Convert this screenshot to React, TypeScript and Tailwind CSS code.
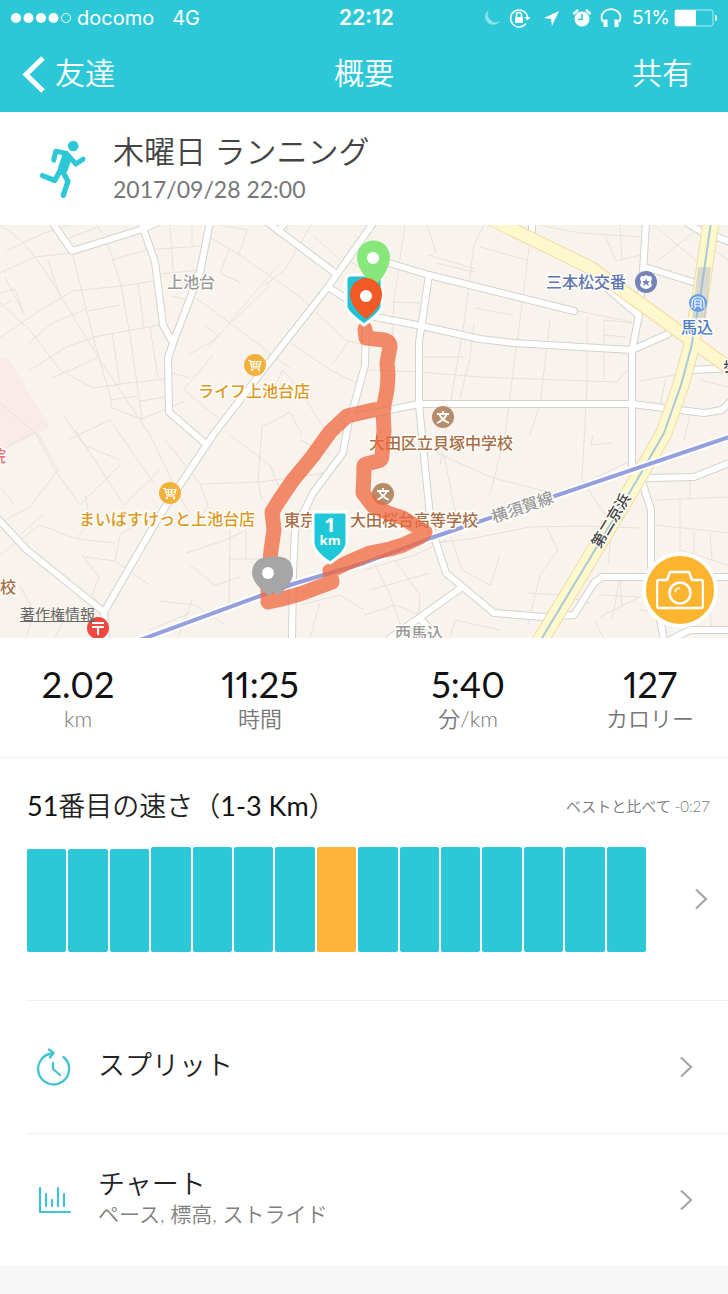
import type { ReactNode } from "react"

const stats = [
  { value: "2.02", unit: "km" },
  { value: "11:25", unit: "時間" },
  { value: "5:40", unit: "分/km" },
  { value: "127", unit: "カロリー" },
]

const runs = [103, 103, 103, 105, 105, 105, 105, 105, 105, 105, 105, 105, 105, 105, 105]
const currentRun = 7

// Map geometry, drawn on a 728 x 413 canvas
const streets = [
  "M-2 -2L22 16L44 44L100 135L150 210L175 262L190 290",
  "M0 48L35 32L72 28M6 26L44 8L75 -2",
  "M0 78L30 105L60 145L93 163",
  "M48 35L60 71M0 113L40 85L73 66L122 61L160 55",
  "M72 28L93 112L110 170L112 183L142 194L185 176",
  "M108 20L121 60L130 110L142 194",
  "M112 35L146 25L200 21M88 86L120 80M52 98L86 84M29 118L52 98",
  "M93 112L126 106L160 100M138 58L144 103M112 108L120 160M150 102L158 153",
  "M92 163L130 158L165 154M110 175L137 171M140 176L165 172",
  "M69 13L96 3M96 0L102 8M170 0L173 45M192 0L192 20M160 49L198 45",
  "M0 68L15 64L24 89M12 75L0 82M5 52L24 89",
  "M52 153L97 133M30 145L68 121L95 112",
  "M63 190L84 220L120 235M35 207L0 226M0 178L40 212L58 245L30 282L0 298",
  "M211 13L240 30L300 72L345 115L364 120",
  "M229 24L220 48L241 58M279 39L209 122M270 60L232 97",
  "M196 73L230 98L290 143M190 129L219 112L205 100M184 164L213 130",
  "M172 71L192 76M220 0L247 5L238 32M311 0L285 45L265 60",
  "M183 164L205 182L220 195M172 148L190 153M270 170L283 145L300 165L323 202",
  "M262 202L290 187L302 210M291 118L330 145L360 160M348 117L332 140",
  "M313 10L340 35M340 30L364 45M230 210L270 240L280 265",
  "M35 207L55 245L80 280L120 240M75 205L124 280L160 245M70 214L110 195L155 260",
  "M0 262L15 280M0 330L40 300L77 314L115 318M77 314L90 295L85 270",
  "M20 310L42 290M85 332L115 336L150 360M82 330L99 352L92 370L104 385",
  "M115 336L120 310L140 296M55 413L70 380M26 413L34 388L20 360",
  "M200 259L260 257L325 248M165 215L200 259L208 280L196 300",
  "M186 328L220 317L245 306M230 305L229 380L205 395M229 334L260 334",
  "M190 340L215 360L240 352M160 376L195 380L225 400M150 405L190 388M178 413L192 375",
  "M246 305L246 334M262 202L258 257L262 275M300 215L330 230",
  "M405 0L394 75L392 130M436 28L427 0M429 30L475 44M392 77L420 78",
  "M484 0L474 20L464 98L440 240M530 15L522 80L514 140L505 210L490 270",
  "M474 83L513 90M474 98L470 133L460 173M527 35L480 22M436 38L475 47",
  "M369 145L420 147L480 152L560 155L617 157L632 140M423 132L466 132",
  "M550 95L540 180L530 210M587 92L587 160L582 255L612 300L608 340",
  "M603 95L632 98M604 95L604 154M604 110L626 112M573 85L632 97",
  "M605 10L616 36L640 30M620 0L622 35M540 0L580 8L640 12",
  "M654 0L693 33L705 45M655 38L700 2M640 156L690 147M666 153L660 180",
  "M716 130L722 150M714 25L728 35M700 155L728 162M690 190L684 215",
  "M444 230L456 290L450 310M431 225L490 252L560 270L632 235",
  "M431 318L470 314L530 302L582 301L640 303M546 301L558 325L540 350L528 400",
  "M450 310L462 345L490 360L500 330M528 368L560 370L590 378",
  "M593 210L591 220L612 218M364 345L415 330L446 315M370 365L430 348",
  "M375 340L390 370L405 413M395 335L420 370L419 393M364 390L395 380L420 390",
  "M655 275L728 272M680 275L680 325L728 340M655 300L728 308M690 253L690 275",
  "M694 307L694 330M710 308L712 335M620 355L622 380M601 370L640 372L600 392",
  "M594 396L604 413M640 385L660 388M300 380L340 370L364 385M310 413L320 378",
  "M620 352L612 395M680 352L690 405M706 353L712 405M450 413L455 395L500 405",
]

const roads = [
  "M52 -3L72 26L143 4L158 -3",
  "M141 -3L155 37L163 100L173 118",
  "M210 -3L200 47L173 118L168 133L169 187L206 219",
  "M374 -3L328 62L267 140L213 210L160 290L104 387L106 416",
  "M267 -3L335 48M278 6L287 -4M328 62L350 76",
  "M364 30L389 38L429 50L574 86",
  "M370 91L422 101L480 114L514 118L632 125L668 109",
  "M429 50L419 117L419 180L422 210L431 302L446 348L494 388L544 392L574 390L594 358L602 352L732 352",
  "M345 195L364 190L419 179L632 179L704 188L722 185L732 175",
  "M646 -3L643 47L639 90L632 125L632 243",
  "M640 250L651 285L651 340L664 416",
  "M609 65L637 89M648 43L693 57M532 -3L532 12M692 145L732 143",
  "M686 -3L705 9M710 9L732 18M648 253L694 252L732 237",
  "M461 363L419 393L390 413M419 393L440 413M668 416L690 405L732 405",
  "M-3 293L27 325L104 387M348 200L343 228L313 268L295 305L293 348L292 416",
  "M366 98L365 140L350 195",
]

const avenue = "M493 -5L591 43L684 110L732 145"
const highway = "M711 -3L701 67L691 123L681 160L664 208L637 255L539 418"
const railway = "M140 415L260 371L293 359L364 338L431 313L732 211"

const route =
  "M365 104L366 113L384 115Q390 116 390 122L387 138L388 150L387 165L383 185L384 205L382 230Q382 235 378 236L366 239Q363 240 364 246L363 268L373 281L388 288L403 293L425 307L420 312L403 320L390 324L370 328L347 338L330 346L332 357L300 369L282 374L268 377L268 362L271 325L274 305L272 287L280 274L293 255L312 232L330 207L347 191L373 185L384 184"

const jp = "font-['Noto_Sans_CJK_JP',sans-serif]"

function MapLabel({
  x,
  y,
  fill,
  children,
  size = 16,
  transform,
}: {
  x: number
  y: number
  fill: string
  children: ReactNode
  size?: number
  transform?: string
}) {
  return (
    <text
      x={x}
      y={y}
      fill={fill}
      fontSize={size}
      transform={transform}
      stroke="#fffdf9"
      strokeWidth={3}
      strokeLinejoin="round"
      paintOrder="stroke"
      className={`${jp} font-medium`}
    >
      {children}
    </text>
  )
}

function CartMarker({ x, y }: { x: number; y: number }) {
  return (
    <g transform={`translate(${x} ${y})`}>
      <circle r="11" fill="#f3b13c" />
      <path d="M-7 -4.500H-5L-3 3H5M-4.500 -3.500H6L4.500 1.500H-3.500M-1.500 -3V1M1.500 -3V1M-4 -1H5" fill="none" stroke="#fff" strokeWidth="1.200" />
      <circle cx="-3" cy="5" r="1.200" fill="#fff" />
      <circle cx="4" cy="5" r="1.200" fill="#fff" />
    </g>
  )
}

function SchoolMarker({ x, y }: { x: number; y: number }) {
  return (
    <g transform={`translate(${x} ${y})`}>
      <circle r="11" fill="#b58d6c" />
      <path d="M0 -6V-3M-6 -3H6M-4 -3Q-1 3 6 6M4 -3Q1 3 -6 6" fill="none" stroke="#fff" strokeWidth="1.800" />
    </g>
  )
}

function RouteMap() {
  return (
    <svg viewBox="0 0 728 413" className="block w-full" role="img" aria-label="ルート">
      <rect width="728" height="413" fill="#f8f4ed" />
      <path d="M0 135L8 132L50 203L0 226Z" fill="#faebe8" />
      <g fill="none" stroke="#e6e2da" strokeWidth="1">
        {streets.map((d) => (
          <path key={d} d={d} />
        ))}
      </g>
      <g fill="none" strokeLinejoin="round" strokeLinecap="round">
        {roads.map((d) => (
          <path key={d} d={d} stroke="#d5d2cc" strokeWidth="8" />
        ))}
        {roads.map((d) => (
          <path key={d} d={d} stroke="#fff" strokeWidth="6" />
        ))}
        <path d={avenue} stroke="#f5d9a4" strokeWidth="14" />
        <path d={highway} stroke="#f5d9a4" strokeWidth="17" />
        <path d={avenue} stroke="#fdf9cd" strokeWidth="12" />
        <path d={highway} stroke="#fdf9cd" strokeWidth="15" />
        <path d={highway} stroke="#a9c9d6" strokeWidth="2" />
        <path d={railway} stroke="#fff" strokeWidth="8" />
        <path d={railway} stroke="#969fdd" strokeWidth="4" />
      </g>
      <path d="M698 42H711L706 93H692Z" fill="#a3a9cc" opacity="0.400" />

      <MapLabel x={167} y={63} fill="#999">上池台</MapLabel>
      <MapLabel x={198} y={172} fill="#dc9824">ライフ上池台店</MapLabel>
      <MapLabel x={79} y={300} fill="#dc9824">まいばすけっと上池台店</MapLabel>
      <MapLabel x={546} y={63} fill="#5d75b0">三本松交番</MapLabel>
      <MapLabel x={681} y={108} fill="#4f7bc4">馬込</MapLabel>
      <MapLabel x={369} y={224} fill="#a66d47">大田区立貝塚中学校</MapLabel>
      <MapLabel x={284} y={301} fill="#a66d47">東京</MapLabel>
      <MapLabel x={350} y={301} fill="#a66d47">大田桜台高等学校</MapLabel>
      <MapLabel x={395} y={414} fill="#999">西馬込</MapLabel>
      <MapLabel x={-10} y={237} fill="#e2717b">院</MapLabel>
      <MapLabel x={0} y={368} fill="#a66d47">校</MapLabel>
      <MapLabel x={0} y={0} fill="#999" transform="translate(494 298) rotate(-19)">横須賀線</MapLabel>
      <MapLabel x={0} y={0} fill="#444" size={15} transform="translate(600 324) rotate(-59)">第二京浜</MapLabel>
      <MapLabel x={723} y={146} fill="#444" size={14}>歩</MapLabel>

      <CartMarker x={255} y={140} />
      <CartMarker x={170} y={268} />
      <SchoolMarker x={443} y={192} />
      <SchoolMarker x={383} y={269} />
      <circle cx="646" cy="57" r="11" fill="#7484b6" />
      <path d="M641 51Q643 52 646 50Q649 52 651 51L652 54Q650 57 652 60Q651 63 646 64Q641 63 640 60Q642 57 640 54Z" fill="#fff" />
      <path d="M646 53L647 56H650L648 58L649 61L646 59L643 61L644 58L642 56H645Z" fill="#7484b6" />
      <circle cx="698" cy="78" r="9" fill="#699fea" />
      <path d="M692 83V78Q692 72 698 72Q704 72 704 78V83M695 75H701V81H695ZM695 78H701M696 81L694 84M700 81L702 84" fill="none" stroke="#fff" strokeWidth="1.200" />
      <circle cx="98" cy="403" r="11" fill="#ef493f" />
      <path d="M92 398H104M92 402H104M98 402V410" stroke="#fff" strokeWidth="2" />

      <path d={route} fill="none" stroke="#ef683f" strokeWidth="15" strokeOpacity="0.760" strokeLinejoin="round" strokeLinecap="round" />

      {/* Waypoint shields */}
      <path d="M351 50H378Q382 50 382 54V81Q382 87 364 100Q346 87 346 81V54Q346 50 351 50Z" fill="#1fc3d3" stroke="#fff" strokeWidth="3" />
      <path d="M315 287H344Q347 287 347 290V317Q347 327 330 338Q313 327 313 317V290Q313 287 315 287Z" fill="#1fc8d8" stroke="#fff" strokeWidth="3" />
      <text x="330" y="307" textAnchor="middle" fill="#fff" fontSize="20" className="font-['Open_Sans',sans-serif] font-bold">
        1
      </text>
      <text x="330" y="320" textAnchor="middle" fill="#fff" fontSize="13" className="font-['Open_Sans',sans-serif] font-bold">
        km
      </text>

      {/* Start, finish and pause pins */}
      <path d="M373 60Q357 45 357 32A16 16 0 0 1 390 32Q390 45 376 60Z" fill="#88e77a" />
      <circle cx="373" cy="33" r="6" fill="#fff" />
      <path d="M366 94Q350 82 350 69A16 16 0 0 1 382 69Q382 82 366 94Z" fill="#f15a24" />
      <circle cx="366" cy="71" r="6" fill="#fff" />
      <path d="M269 371Q252 358 252 348Q253 331 271 332Q293 329 293 348Q293 358 278 371L273 367Z" fill="#a6a6a6" />
      <circle cx="268" cy="348" r="6" fill="#fff" />
    </svg>
  )
}

function StatusIcons() {
  return (
    <div className="flex items-center gap-2">
      <svg viewBox="0 0 18 18" className="size-[18px]" fill="#8fe0e9">
        <path d="M6 1A8 8 0 1 0 17 12A8 8 0 0 1 6 1Z" />
      </svg>
      <svg viewBox="0 0 22 20" className="h-5 w-[22px]" fill="none" stroke="#fff" strokeWidth="1.500">
        <path d="M17 15.500A8.500 8.500 0 1 1 18.500 9" />
        <path d="M15.500 9H21.500L18.500 12.500Z" fill="#fff" stroke="none" />
        <rect x="6" y="9" width="8" height="6" rx="1" fill="#fff" stroke="none" />
        <path d="M7.500 9V7A2.500 2.500 0 0 1 12.500 7V9" />
      </svg>
      <svg viewBox="0 0 18 18" className="mx-1 size-[17px]" fill="#fff">
        <path d="M17 1L1 8.500L8.500 9.500L9.500 17Z" />
      </svg>
      <svg viewBox="0 0 20 20" className="size-5">
        <circle cx="10" cy="11" r="7.500" fill="#fff" />
        <path d="M1.500 6L6 2M18.500 6L14 2" stroke="#fff" strokeWidth="2.500" />
        <path d="M10 6V11.500H6" fill="none" stroke="#2dc8d8" strokeWidth="1.500" />
      </svg>
      <svg viewBox="0 0 22 20" className="h-5 w-[22px]" fill="none" stroke="#fff">
        <path d="M3 14Q1.500 11 1.500 9.500A9 8 0 0 1 20.500 9.500Q20.500 11 19 14" strokeWidth="1.800" />
        <path d="M5.500 11.500V19M16.500 11.500V19" strokeWidth="4" />
      </svg>
    </div>
  )
}

function Runner() {
  return (
    <svg viewBox="118 84 142 182" className="h-[60px] w-12" fill="none" stroke="#2dc8d8" strokeLinecap="round" strokeLinejoin="round">
      <circle cx="220" cy="105" r="16" fill="#2dc8d8" stroke="none" />
      <path d="M161 148L167 121L200 128L228 160L250 145" strokeWidth="15" />
      <path d="M203 132L187 180" strokeWidth="30" strokeLinecap="butt" />
      <path d="M180 180L164 210L127 195M187 180L204 212L190 255" strokeWidth="16" />
    </svg>
  )
}

function Chevron() {
  return (
    <svg viewBox="0 0 14 22" className="h-[22px] w-3.5 shrink-0" fill="none" stroke="#a6a6a6" strokeWidth="2.200">
      <path d="M2 1.500L12 11L2 20.500" />
    </svg>
  )
}

function DetailRow({ icon, title, subtitle }: { icon: ReactNode; title: string; subtitle?: string }) {
  return (
    <a href="#" className="ml-[27px] flex h-[133px] items-center border-t border-[#f0f0f0] pr-[35px] pl-2">
      <span className="w-[63px] shrink-0">{icon}</span>
      <span className="flex grow flex-col pb-1">
        <span className="text-[27px] leading-8 text-[#222]">{title}</span>
        {subtitle && <span className="text-[21px] leading-7 text-[#808080]">{subtitle}</span>}
      </span>
      <Chevron />
    </a>
  )
}

export default function App() {
  return (
    <div className="bg-white font-['Lato','Noto_Sans_CJK_JP',sans-serif] font-[350]">
      <header className="bg-[#2dc8d8] text-white">
        <div className="grid h-9 grid-cols-[1fr_auto_1fr] items-center pr-2.5 pl-[11px] font-['Inter',sans-serif] text-[19px] font-normal">
          <div className="flex items-center text-xl">
            <svg viewBox="0 0 60 10" className="mr-1.5 h-2.5 w-[60px]" fill="#fff">
              <circle cx="5" cy="5" r="5" />
              <circle cx="17.500" cy="5" r="5" />
              <circle cx="30" cy="5" r="5" />
              <circle cx="42.500" cy="5" r="5" />
              <circle cx="55" cy="5" r="4.500" fill="none" stroke="#fff" />
            </svg>
            <span>docomo</span>
            <span className="ml-[18px]">4G</span>
          </div>
          <span className="pl-1 text-[21px] font-semibold">22:12</span>
          <div className="flex items-center justify-end gap-2.5">
            <StatusIcons />
            <div className="flex items-center gap-1">
              <span>51%</span>
              <svg viewBox="0 0 44 18" className="h-[18px] w-11">
                <rect x="1" y="1" width="38" height="16" rx="2" fill="none" stroke="#b5e9ef" />
                <rect x="1" y="1" width="21" height="16" rx="1" fill="#fff" />
                <path d="M41 6Q43 6 43 9Q43 12 41 12Z" fill="#fff" />
              </svg>
            </div>
          </div>
        </div>
        <nav className="grid h-[76px] grid-cols-3 items-center px-[22px] text-[30px] leading-9">
          <button className="flex items-center gap-2.5 justify-self-start">
            <svg viewBox="0 0 23 37" className="h-[37px] w-[23px]" fill="none" stroke="#fff" strokeWidth="5">
              <path d="M21 2L4 18.500L21 35" />
            </svg>
            <span className="pb-1">友達</span>
          </button>
          <h1 className="justify-self-center pb-1">概要</h1>
          <button className="justify-self-end pr-3.5 pb-1">共有</button>
        </nav>
      </header>

      <section className="flex h-[113px] items-center gap-[26px] pl-[39px]">
        <Runner />
        <div>
          <h2 className="text-[31px] leading-10 text-[#444]">木曜日 ランニング</h2>
          <p className="text-[23px] leading-9 font-normal text-[#777]">2017/09/28 22:00</p>
        </div>
      </section>

      <section className="relative overflow-hidden">
        <RouteMap />
        <a href="#" className={`absolute bottom-3 left-5 text-[15px] leading-6 font-normal text-[#666] underline ${jp}`}>
          著作権情報
        </a>
        <button
          aria-label="写真を追加"
          className="absolute right-2.5 bottom-2.5 flex size-[76px] items-center justify-center rounded-full border-4 border-white bg-[#fdb52f]"
        >
          <svg viewBox="0 0 48 40" className="h-10 w-12" fill="none" stroke="#fff" strokeWidth="2.500" strokeLinejoin="round">
            <path d="M3 10H11L14 2H33L36 10H45Q47 10 47 12V36Q47 38 45 38H3Q1 38 1 36V12Q1 10 3 10Z" />
            <circle cx="24" cy="23" r="10.500" />
            <path d="M19 22Q20 18 24 18" strokeWidth="1.500" />
          </svg>
        </button>
      </section>

      <dl className="grid h-[120px] grid-cols-[3fr_4fr_4fr_3fr] content-center border-b border-[#f0f0f0] text-center">
        {stats.map((stat) => (
          <div key={stat.unit} className="flex flex-col-reverse">
            <dt className="text-[22px] leading-7 text-[#777]">{stat.unit}</dt>
            <dd className="text-4xl leading-[42px] font-normal text-[#111] proportional-nums">{stat.value}</dd>
          </div>
        ))}
      </dl>

      <section className="h-[242px] pt-7">
        <div className="flex items-center justify-between pr-[18px] pl-[27px]">
          <h3 className="text-[27px] leading-10 text-[#222]">
            <span className="font-normal text-[#111]">51</span>番目の速さ（<span className="font-normal text-[#111]">1-3 Km</span>）
          </h3>
          <p className="text-[15px] leading-6 text-[#777]">ベストと比べて -0:27</p>
        </div>
        <a href="#" className="mt-5 flex items-center justify-between pr-5 pl-[27px]">
          <span className="mr-12 flex h-[106px] grow items-end gap-0.5">
            {runs.map((height, index) => (
              <span
                key={index}
                className={`grow rounded-[2px] ${index === currentRun ? "bg-[#fdb539]" : "bg-[#2dc8d8]"}`}
                style={{ height }}
              />
            ))}
          </span>
          <Chevron />
        </a>
      </section>

      <DetailRow
        title="スプリット"
        icon={
          <svg viewBox="0 0 36 38" className="h-[38px] w-9" fill="none" stroke="#3fc3d2" strokeWidth="2.300" strokeLinecap="round" strokeLinejoin="round">
            <path d="M28.500 9A15.500 15.500 0 1 1 17 5.500M14 1.500L18.500 5L15 9.500M18 15V21L25 27" />
          </svg>
        }
      />
      <DetailRow
        title="チャート"
        subtitle="ペース, 標高, ストライド"
        icon={
          <svg viewBox="0 0 36 30" className="h-[30px] w-9" fill="none" stroke="#3fc3d2" strokeWidth="2.200" strokeLinecap="round" strokeLinejoin="round">
            <path d="M5 3V27H35M11 9V21M17 15V21M23 3V21M29 9V21" />
          </svg>
        }
      />
      <footer className="h-7 bg-[#f6f6f6]" />
    </div>
  )
}
